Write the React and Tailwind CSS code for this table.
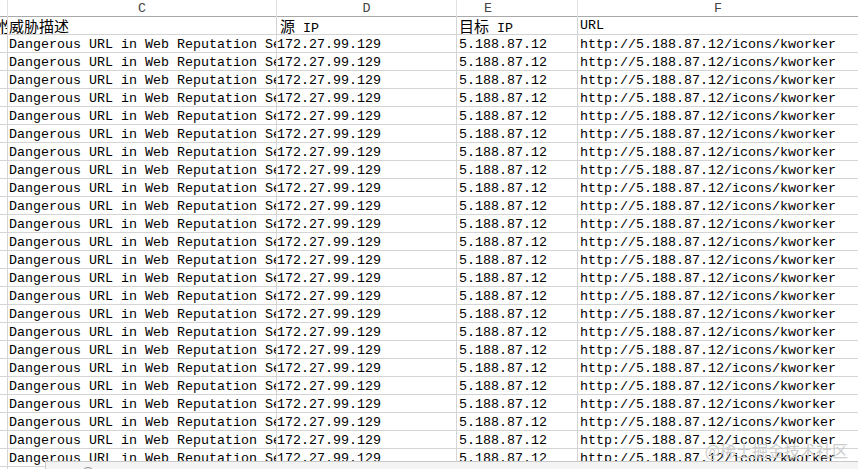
import React from "react";

const mono = { fontFamily: '"Liberation Mono", "Noto Sans CJK SC", monospace' };
const cjk = { fontFamily: '"Noto Sans CJK SC", "Liberation Mono", sans-serif' };

const rows = Array.from({ length: 25 });

export default function App() {
  return (
    <div className="relative w-[858px] h-[469px] overflow-hidden bg-white text-black" style={mono}>
      {/* column letters */}
      <div className="grid grid-cols-[8px_269px_180px_121px_280px] h-[17px] border-b border-[#a9a9a9] text-[13.33px] leading-[17px] text-[#444]">
        <div className="border-r border-[#e1e1e1]" />
        <div className="border-r border-[#e1e1e1] text-center">C</div>
        <div className="border-r border-[#e1e1e1] text-center">D</div>
        <div className="border-r border-[#e1e1e1] pl-[27px]">E</div>
        <div className="text-center">F</div>
      </div>

      {/* title row */}
      <div className="grid grid-cols-[8px_269px_180px_121px_280px] h-[18px] border-b border-[#d4d4d4] leading-[18px]">
        <div className="border-r border-[#d4d4d4] overflow-hidden flex justify-end text-[16px]" style={cjk}>
          <span className="-mr-[8px]">性</span>
        </div>
        <div className="border-r border-[#d4d4d4] pl-px text-[15px] overflow-hidden whitespace-nowrap" style={cjk}>威胁描述</div>
        <div className="border-r border-[#d4d4d4] pl-[3px] overflow-hidden whitespace-nowrap">
          <span className="text-[15px]" style={cjk}>源</span>
          <span className="text-[13.33px]"> IP</span>
        </div>
        <div className="border-r border-[#d4d4d4] pl-[2px] overflow-hidden whitespace-nowrap">
          <span className="text-[15px]" style={cjk}>目标</span>
          <span className="text-[13.33px]"> IP</span>
        </div>
        <div className="pl-[2px] text-[13.33px] overflow-hidden whitespace-nowrap">URL</div>
      </div>

      {/* data rows */}
      {rows.map((_, i) => (
        <div
          key={i}
          className="grid grid-cols-[8px_269px_180px_121px_280px] h-[18px] border-b border-[#d4d4d4] text-[13.33px] leading-[19px]"
        >
          <div className="border-r border-[#d4d4d4]" />
          <div className="border-r border-[#d4d4d4] pl-px overflow-hidden whitespace-nowrap">
            Dangerous URL in Web Reputation Service
          </div>
          <div className="border-r border-[#d4d4d4] overflow-hidden whitespace-nowrap">172.27.99.129</div>
          <div className="border-r border-[#d4d4d4] pl-[2px] overflow-hidden whitespace-nowrap">5.188.87.12</div>
          <div className="pl-[2px] overflow-hidden whitespace-nowrap">http://5.188.87.12/icons/kworker</div>
        </div>
      ))}

      {/* watermark */}
      <div
        className="absolute right-[10px] top-[438px] text-[16px] text-[#cdcdcd]"
        style={{ fontFamily: '"Noto Sans CJK SC", sans-serif' }}
      >
        @稀土掘金技术社区
      </div>

      {/* bottom panel */}
      <div className="absolute left-[45px] right-0 top-[461px] bottom-0 bg-[#f4f4f4] border-t border-l border-[#c9c9c9]">
        <div className="absolute left-[36px] top-[5px] w-[12px] h-[12px] rounded-full border border-[#8a8a8a]" />
      </div>
    </div>
  );
}
